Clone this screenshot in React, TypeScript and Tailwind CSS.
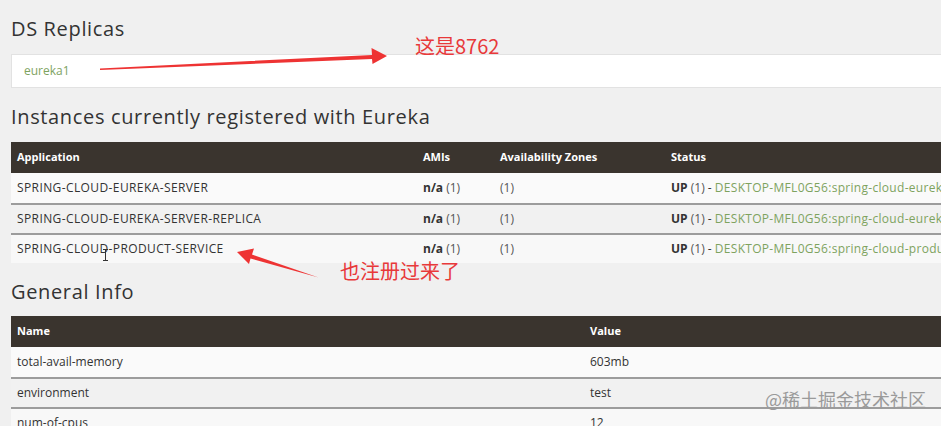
const FONT = { fontFamily: '"Open Sans", "Noto Sans", sans-serif' };
const CJK = { fontFamily: '"Noto Sans CJK SC", sans-serif' };

const instances = [
  { app: 'SPRING-CLOUD-EUREKA-SERVER', host: 'DESKTOP-MFL0G56:spring-cloud-eureka-server:8761' },
  { app: 'SPRING-CLOUD-EUREKA-SERVER-REPLICA', host: 'DESKTOP-MFL0G56:spring-cloud-eureka-server-replica:8762' },
  { app: 'SPRING-CLOUD-PRODUCT-SERVICE', host: 'DESKTOP-MFL0G56:spring-cloud-product-service:8081' },
];

const info = [
  ['total-avail-memory', '603mb'],
  ['environment', 'test'],
  ['num-of-cpus', '12'],
];

const rowBg = ['bg-[#fafafa]', 'bg-[#f1f1f1]', 'bg-[#f8f8f8]'];

function Heading({ children }: { children: string }) {
  return <h2 className="text-[20px] leading-6 font-medium text-[#333] tracking-[0.65px]">{children}</h2>;
}

export default function App() {
  return (
    <div className="relative w-[941px] h-[426px] overflow-hidden bg-[#f0f0f0]" style={FONT}>
      <div className="w-[1200px] pl-[11px] pt-[17px] flex flex-col">
        <Heading>DS Replicas</Heading>
        <div className="mt-[13px] h-[34px] bg-white border border-[#e2e2e2] flex items-center pl-[12px]">
          <span className="text-[12px] text-[#7ea35f]">eureka1</span>
        </div>

        <div className="mt-[17px]">
          <Heading>Instances currently registered with Eureka</Heading>
        </div>
        <div className="mt-[13px] flex flex-col text-[12px] text-[#333]">
          <div className="h-[31px] bg-[#3a342e] text-white text-[11px] font-bold flex items-center">
            <div className="w-[406px] pl-[6px]">Application</div>
            <div className="w-[77px] pl-[6px]">AMIs</div>
            <div className="w-[171px] pl-[6px]">Availability Zones</div>
            <div className="pl-[6px]">Status</div>
          </div>
          {instances.map((r, i) => (
            <div
              key={r.app}
              className={`h-[30px] flex items-center ${rowBg[i]} ${i > 0 ? 'border-t-2 border-[#9c9c9c]' : ''}`}
            >
              <div className="w-[406px] pl-[6px] tracking-[0.4px]">{r.app}</div>
              <div className="w-[77px] pl-[6px]">
                <span className="font-bold">n/a</span> <span className="text-[#555]">(1)</span>
              </div>
              <div className="w-[171px] pl-[6px] text-[#555]">(1)</div>
              <div className="pl-[6px] whitespace-nowrap">
                <span className="font-bold">UP</span> <span className="text-[#555]">(1)</span> -{' '}
                <span className="text-[#7ea35f] tracking-[0.3px]">{r.host}</span>
              </div>
            </div>
          ))}
        </div>

        <div className="mt-[17px]">
          <Heading>General Info</Heading>
        </div>
        <div className="mt-[12px] flex flex-col text-[12px] text-[#333]">
          <div className="h-[31px] bg-[#3a342e] text-white text-[11px] font-bold flex items-center">
            <div className="w-[573px] pl-[6px]">Name</div>
            <div className="pl-[6px]">Value</div>
          </div>
          {info.map(([k, v], i) => (
            <div
              key={k}
              className={`h-[30px] flex items-center ${rowBg[i]} ${i > 0 ? 'border-t-2 border-[#9c9c9c]' : ''}`}
            >
              <div className="w-[573px] pl-[6px]">{k}</div>
              <div className="pl-[6px]">{v}</div>
            </div>
          ))}
        </div>
      </div>

      {/* annotations */}
      <svg className="absolute left-0 top-0 pointer-events-none" width="941" height="426">
        <polygon
          points="100,68.5 372,55 371.5,48 387,56 372.5,64 372,59 100,70"
          fill="#ee3333"
        />
        <polygon
          points="237,252 254,248.5 252,254.5 318.5,277.5 250.5,258.5 249,264"
          fill="#ee3333"
        />
        <path d="M103 249.5h5M105.5 249.5v11M103 260.5h5" stroke="#333" strokeWidth="1" fill="none" />
      </svg>
      <div className="absolute left-[415px] top-[34px] text-[20px] leading-6 text-[#e8393a]" style={CJK}>
        这是8762
      </div>
      <div className="absolute left-[340px] top-[259px] text-[20px] leading-6 text-[#e8393a]" style={CJK}>
        也注册过来了
      </div>
      <div className="absolute left-[765px] top-[387px] text-[18px] leading-6 text-[#9a9a9a]" style={CJK}>
        @稀土掘金技术社区
      </div>
    </div>
  );
}
